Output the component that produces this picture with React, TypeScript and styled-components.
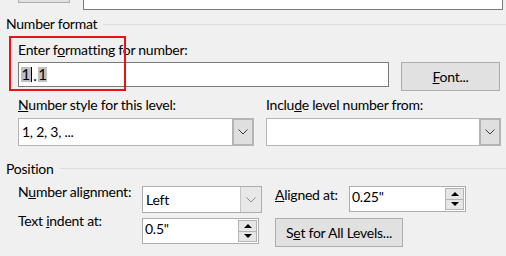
import styled, { createGlobalStyle } from "styled-components";

const GlobalStyle = createGlobalStyle`
  html, body {
    margin: 0;
    padding: 0;
    background: #f0f0f0;
  }
  body {
    font-family: Lato, "Liberation Sans", sans-serif;
    font-size: 14px;
    letter-spacing: -0.25px;
    color: #000;
  }
`;

export default function App() {
  return (
    <>
      <GlobalStyle />
      <Page>
        <TopStrip>
          <CutButton />
          <CutField />
        </TopStrip>

        <Legend>
          <span>Number format</span>
          <Rule />
        </Legend>

        <Body>
          <FieldLabel $top={10}>
            Enter f<u>o</u>rmatting for number:
          </FieldLabel>
          <InputRow>
            <TextField>
              <Shade>1</Shade>
              <Caret />
              <Dot>.</Dot>
              <Shade>1</Shade>
            </TextField>
            <PushButton $w={99}>
              <u>F</u>ont...
            </PushButton>
          </InputRow>

          <TwoCols>
            <Column>
              <FieldLabel $top={0}>
                <u>N</u>umber style for this level:
              </FieldLabel>
              <Combo $w={236}>
                <ComboValue>1, 2, 3, ...</ComboValue>
                <ArrowBox>
                  <Chevron />
                </ArrowBox>
              </Combo>
            </Column>
            <Column>
              <FieldLabel $top={0}>
                Inclu<u>d</u>e level number from:
              </FieldLabel>
              <Combo $w={235}>
                <ComboValue />
                <ArrowBox>
                  <Chevron />
                </ArrowBox>
              </Combo>
            </Column>
          </TwoCols>
        </Body>

        <Legend $top={15}>
          <span>Position</span>
          <Rule $dy={-1} />
        </Legend>

        <PositionGrid>
          <RowLabel $dy={-2}>
            N<u>u</u>mber alignment:
          </RowLabel>
          <Combo $w={120} $h={27} $light>
            <ComboValue>Left</ComboValue>
            <ArrowBox $light>
              <Chevron $light />
            </ArrowBox>
          </Combo>
          <RowLabel $dy={1}>
            <u>A</u>ligned at:
          </RowLabel>
          <SpinBox value={'0.25"'} />

          <RowLabel $dy={-5}>
            Text <u>i</u>ndent at:
          </RowLabel>
          <SpinBox value={'0.5"'} />
          <WideCell>
            <PushButton $w={128}>
              S<u>e</u>t for All Levels...
            </PushButton>
          </WideCell>
        </PositionGrid>

        <Annotation />
      </Page>
    </>
  );
}

function SpinBox({ value }: { value: string }) {
  return (
    <SpinFrame>
      <SpinValue>{value}</SpinValue>
      <SpinButtons>
        <SpinBtn>
          <Tri $up />
        </SpinBtn>
        <SpinBtn>
          <Tri />
        </SpinBtn>
      </SpinButtons>
    </SpinFrame>
  );
}

function Chevron({ $light }: { $light?: boolean }) {
  return (
    <svg width="10" height="6" viewBox="0 0 10 6">
      <path
        d="M0.5 0.5 L5 5 L9.5 0.5"
        fill="none"
        stroke={$light ? "#8a8a8a" : "#3c3c3c"}
        strokeWidth="1"
      />
    </svg>
  );
}

const Page = styled.div`
  position: relative;
  width: 506px;
  height: 256px;
  overflow: hidden;
  background: #f0f0f0;
`;

const TopStrip = styled.div`
  display: flex;
  align-items: flex-start;
  gap: 13px;
  height: 10px;
  padding-left: 18px;
`;

const CutButton = styled.div`
  box-sizing: border-box;
  width: 52px;
  height: 3px;
  background: #e1e1e1;
  border: 1px solid #adadad;
  border-top: 0;
`;

const CutField = styled.div`
  box-sizing: border-box;
  width: 420px;
  height: 10px;
  background: #fff;
  border: 1px solid #7a7a7a;
  border-top: 0;
`;

const Legend = styled.div<{ $top?: number }>`
  display: flex;
  align-items: center;
  gap: 6px;
  height: 16px;
  line-height: 16px;
  margin-top: ${({ $top }) => $top ?? 6}px;
  padding-left: 6px;
`;

const Rule = styled.div<{ $dy?: number }>`
  flex: 1;
  height: 1px;
  margin-top: ${({ $dy }) => ($dy ?? 0) * 2}px;
  background: #dcdcdc;
`;

const Body = styled.div`
  padding: 0 6px 0 18px;
`;

const FieldLabel = styled.div<{ $top: number }>`
  line-height: 16px;
  margin-top: ${({ $top }) => $top}px;
  white-space: nowrap;
`;

const InputRow = styled.div`
  display: flex;
  align-items: flex-start;
  gap: 12px;
  margin-top: 4px;
  margin-bottom: 6px;
`;

const TextField = styled.div`
  box-sizing: border-box;
  display: flex;
  align-items: center;
  width: 372px;
  height: 25px;
  padding-left: 2px;
  background: #fff;
  border: 1px solid #7a7a7a;
  font-size: 15px;
  letter-spacing: 0;
`;

const Shade = styled.span`
  display: inline-block;
  line-height: 15px;
  padding: 0 0.5px;
  background: #c0c0c0;
`;

const Dot = styled.span`
  padding: 0 1px 0 1.5px;
`;

const Caret = styled.span`
  display: inline-block;
  width: 1px;
  height: 15px;
  background: #000;
`;

const PushButton = styled.button<{ $w: number }>`
  box-sizing: border-box;
  width: ${({ $w }) => $w}px;
  height: 29px;
  padding: 0;
  background: #e1e1e1;
  border: 1px solid #adadad;
  font: inherit;
  letter-spacing: -0.25px;
  color: #000;
`;

const TwoCols = styled.div`
  display: grid;
  grid-template-columns: 236px 235px;
  gap: 12px;
`;

const Column = styled.div`
  display: flex;
  flex-direction: column;
  gap: 5px;
`;

const Combo = styled.div<{ $w: number; $h?: number; $light?: boolean }>`
  box-sizing: border-box;
  display: flex;
  width: ${({ $w }) => $w}px;
  height: ${({ $h }) => $h ?? 28}px;
  background: #fff;
  border: 1px solid ${({ $light }) => ($light ? "#adadad" : "#b4b4b4")};
`;

const ComboValue = styled.div`
  flex: 1;
  padding: 4px 0 0 3px;
  line-height: 18px;
`;

const ArrowBox = styled.div<{ $light?: boolean }>`
  display: flex;
  align-items: center;
  justify-content: center;
  width: 20px;
  background: ${({ $light }) => ($light ? "#e8e8e8" : "#dfdfdf")};
  border-left: 1px solid ${({ $light }) => ($light ? "#c4c4c4" : "#b4b4b4")};
  box-shadow: ${({ $light }) => ($light ? "none" : "inset 0 0 0 1px #b4b4b4")};
`;

const PositionGrid = styled.div`
  display: grid;
  grid-template-columns: 124px 133px 74px 117px;
  row-gap: 5px;
  align-items: start;
  margin-top: 9px;
  padding-left: 18px;
`;

const RowLabel = styled.div<{ $dy: number }>`
  line-height: 16px;
  margin-top: ${({ $dy }) => $dy}px;
  white-space: nowrap;
`;

const WideCell = styled.div`
  grid-column: 3 / span 2;
`;

const SpinFrame = styled.div`
  box-sizing: border-box;
  display: flex;
  width: 117px;
  height: 26px;
  padding: 1px;
  background: #fff;
  border: 1px solid #adadad;
`;

const SpinValue = styled.div`
  flex: 1;
  padding: 0 0 0 1px;
  line-height: 18px;
`;

const SpinButtons = styled.div`
  display: flex;
  flex-direction: column;
  width: 19px;
`;

const SpinBtn = styled.div`
  box-sizing: border-box;
  flex: 1;
  display: flex;
  align-items: center;
  justify-content: center;
  background: #e6e6e6;
  border: 1px solid #b4b4b4;

  & + & {
    border-top: 0;
  }
`;

const Tri = styled.span<{ $up?: boolean }>`
  width: 0;
  height: 0;
  border-left: 4px solid transparent;
  border-right: 4px solid transparent;
  ${({ $up }) =>
    $up ? "border-bottom: 4px solid #000;" : "border-top: 4px solid #000;"}
`;

const Annotation = styled.div`
  position: absolute;
  left: 9px;
  top: 36px;
  width: 117px;
  height: 55px;
  box-sizing: border-box;
  border: 2px solid #ee1111;
`;
